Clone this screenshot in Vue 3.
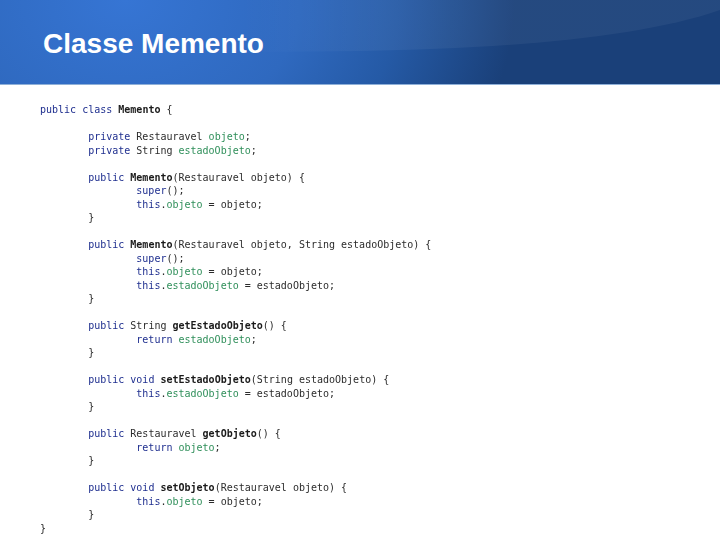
<script setup>
const source = [
  '{k|public} {k|class} {m|Memento} {',
  '',
  '\t{k|private} Restauravel {f|objeto};',
  '\t{k|private} String {f|estadoObjeto};',
  '',
  '\t{k|public} {m|Memento}(Restauravel objeto) {',
  '\t\t{k|super}();',
  '\t\t{k|this}.{f|objeto} = objeto;',
  '\t}',
  '',
  '\t{k|public} {m|Memento}(Restauravel objeto, String estadoObjeto) {',
  '\t\t{k|super}();',
  '\t\t{k|this}.{f|objeto} = objeto;',
  '\t\t{k|this}.{f|estadoObjeto} = estadoObjeto;',
  '\t}',
  '',
  '\t{k|public} String {m|getEstadoObjeto}() {',
  '\t\t{k|return} {f|estadoObjeto};',
  '\t}',
  '',
  '\t{k|public} {k|void} {m|setEstadoObjeto}(String estadoObjeto) {',
  '\t\t{k|this}.{f|estadoObjeto} = estadoObjeto;',
  '\t}',
  '',
  '\t{k|public} Restauravel {m|getObjeto}() {',
  '\t\t{k|return} {f|objeto};',
  '\t}',
  '',
  '\t{k|public} {k|void} {m|setObjeto}(Restauravel objeto) {',
  '\t\t{k|this}.{f|objeto} = objeto;',
  '\t}',
  '}'
]

const lines = source.map((raw) => {
  const parts = []
  const re = /\{(\w)\|([^}]*)\}/g
  let last = 0
  let hit
  while ((hit = re.exec(raw))) {
    if (hit.index > last) parts.push({ cls: '', text: raw.slice(last, hit.index) })
    parts.push({ cls: hit[1], text: hit[2] })
    last = re.lastIndex
  }
  if (last < raw.length) parts.push({ cls: '', text: raw.slice(last) })
  return parts
})
</script>

<template>
  <div class="slide">
    <header class="banner">
      <svg class="gloss" width="720" height="84" viewBox="0 0 720 84" aria-hidden="true">
        <defs>
          <linearGradient id="sheen" x1="0" y1="0" x2="1" y2="0">
            <stop offset="0" stop-color="#ffffff" stop-opacity="0" />
            <stop offset="0.3" stop-color="#ffffff" stop-opacity="0.05" />
            <stop offset="1" stop-color="#ffffff" stop-opacity="0.05" />
          </linearGradient>
        </defs>
        <path d="M240 52 L360 51 C500 49 640 38 720 10 L720 0 L240 0 Z" fill="url(#sheen)" />
      </svg>
      <h1 class="title">Classe Memento</h1>
    </header>
    <pre class="code"><code><span v-for="(line, i) in lines" :key="i" class="line"><span v-for="(part, j) in line" :key="j" :class="part.cls">{{ part.text }}</span></span></code></pre>
  </div>
</template>

<style>
html, body {
  margin: 0;
  background: #ffffff;
}
</style>

<style scoped>
.slide {
  width: 720px;
  height: 540px;
  overflow: hidden;
  background: #ffffff;
  display: flex;
  flex-direction: column;
}
.banner {
  position: relative;
  flex: none;
  height: 85px;
  box-sizing: border-box;
  padding: 27px 0 0 43px;
  border-bottom: 1px solid #8fb0d8;
  background: radial-gradient(ellipse 390px 300px at 125px 0, #3675d4 0%, #2f69bf 45%, #255aa6 70%, #1a4079 100%);
  background-color: #1a4079;
}
.gloss {
  position: absolute;
  left: 0;
  top: 0;
}
.title {
  position: relative;
  margin: 0;
  font-family: "Liberation Sans", Arial, sans-serif;
  font-size: 28px;
  line-height: 34px;
  font-weight: 700;
  color: #ffffff;
}
.code {
  margin: 0;
  padding: 18px 0 0 40px;
  font-family: "Liberation Mono", "Courier New", monospace;
  font-size: 10px;
  line-height: 13.5px;
  tab-size: 8;
  color: #2c2c2c;
  filter: blur(0.3px);
}
.line {
  display: block;
  height: 13.5px;
  white-space: pre;
}
.k {
  color: #1f2f8f;
}
.f {
  color: #2f8f5a;
}
.m {
  font-weight: 700;
  color: #1a1a1a;
}
</style>
